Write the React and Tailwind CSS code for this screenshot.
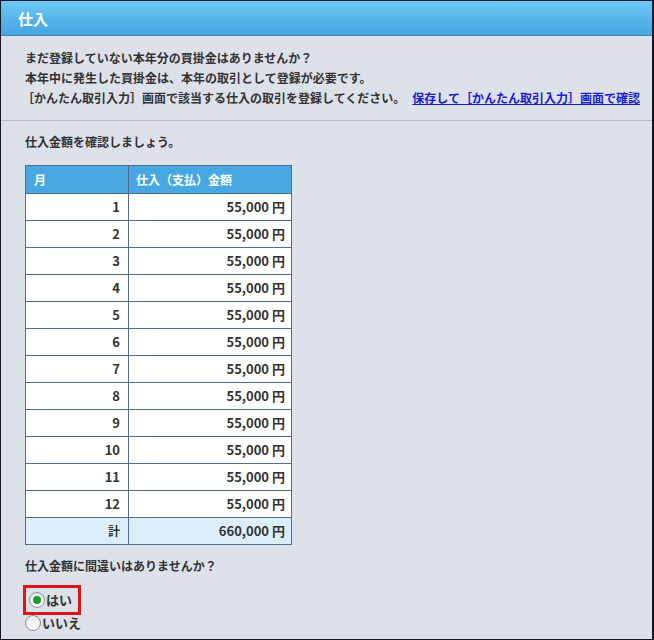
import React, { useState } from 'react';

const rows = [1, 2, 3, 4, 5, 6, 7, 8, 9, 10, 11, 12].map((m) => ({ month: m, amount: '55,000' }));

export default function App() {
  const [answer, setAnswer] = useState('yes');

  return (
    <div
      className="w-[654px] h-[640px] bg-[#dde1ea] border border-[#141821] border-r-2 overflow-hidden text-[#333]"
      style={{ fontFamily: '"Noto Sans CJK JP", "Noto Sans", sans-serif' }}
    >
      {/* Header */}
      <div className="h-[35px] bg-gradient-to-b from-[#6cc9f8] to-[#46a4df] border-b border-[#3d86b8] flex items-center px-[17px]">
        <h1 className="text-white text-[15px] font-bold leading-none">仕入</h1>
      </div>

      {/* Notice */}
      <div className="pl-6 pt-[12px] pb-[12px] text-[12px] font-bold leading-[20px] border-b border-[#b8bcc6]">
        <p>まだ登録していない本年分の買掛金はありませんか？</p>
        <p>本年中に発生した買掛金は、本年の取引として登録が必要です。</p>
        <p className="-ml-[3px] whitespace-nowrap flex">
          <span>［かんたん取引入力］画面で該当する仕入の取引を登録してください。</span>
          <a href="#" className="ml-[7px] text-[#1a1ad8] underline">保存して［かんたん取引入力］画面で確認</a>
        </p>
      </div>

      {/* Amount check */}
      <div className="px-6 pt-[11px]">
        <p className="text-[12px] font-bold leading-[20px]">仕入金額を確認しましょう。</p>

        <table className="mt-[13px] w-[267px] border-collapse text-[13px] font-bold">
          <thead>
            <tr className="h-[28px] bg-[#47a7e2] text-white">
              <th className="w-[103px] border border-[#4f6f8c] text-left px-2 text-[12px]">月</th>
              <th className="border border-[#4f6f8c] text-left px-[7px] text-[12px]">仕入（支払）金額</th>
            </tr>
          </thead>
          <tbody>
            {rows.map((r) => (
              <tr key={r.month} className="h-[27px] bg-white">
                <td className="border border-[#4f6f8c] text-right px-2">{r.month}</td>
                <td className="border border-[#4f6f8c] text-right px-[6px]">{r.amount} 円</td>
              </tr>
            ))}
            <tr className="h-[27px] bg-[#ddeefb]">
              <td className="border border-[#4f6f8c] text-right px-2 text-[12px]">計</td>
              <td className="border border-[#4f6f8c] text-right px-[6px]">660,000 円</td>
            </tr>
          </tbody>
        </table>

        <p className="mt-[11px] text-[12px] font-bold leading-[20px]">仕入金額に間違いはありませんか？</p>

        <div className="mt-[9px] flex flex-col items-start text-[13px] font-bold">
          <label className="-ml-[2px] flex items-center gap-[1px] border-[3px] border-[#e0141b] pl-[3px] pr-[6px] h-[30px] cursor-pointer">
            <Radio checked={answer === 'yes'} onClick={() => setAnswer('yes')} />
            <span>はい</span>
          </label>
          <label className="flex items-center gap-[1px] h-[18px] mt-[-1px] cursor-pointer">
            <Radio checked={answer === 'no'} onClick={() => setAnswer('no')} />
            <span>いいえ</span>
          </label>
        </div>
      </div>
    </div>
  );
}

function Radio({ checked, onClick }) {
  return (
    <span
      onClick={onClick}
      className="w-[16px] h-[16px] rounded-full border border-[#8a8f99] bg-gradient-to-b from-[#e8eaee] to-white flex items-center justify-center"
    >
      {checked && <span className="w-[8px] h-[8px] rounded-full bg-[#1b9e2a]" />}
    </span>
  );
}
